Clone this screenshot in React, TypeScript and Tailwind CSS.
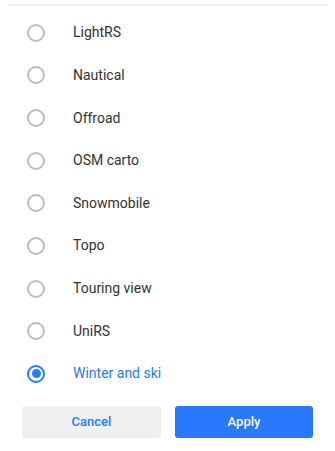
import React, { useState } from "react";

const styles = [
  "LightRS",
  "Nautical",
  "Offroad",
  "OSM carto",
  "Snowmobile",
  "Topo",
  "Touring view",
  "UniRS",
  "Winter and ski",
];

function Radio({ checked }: { checked: boolean }) {
  return (
    <span
      className={`flex h-[18px] w-[18px] items-center justify-center rounded-full border-2 ${
        checked ? "border-[#2979ff]" : "border-[#bdbdbd]"
      }`}
    >
      {checked && <span className="h-[9px] w-[9px] rounded-full bg-[#2979ff]" />}
    </span>
  );
}

export default function App() {
  const [selected, setSelected] = useState("Winter and ski");

  return (
    <div className="h-[451px] w-[335px] bg-white font-['Roboto',sans-serif]">
      <div className="pt-1">
        <div className="ml-2 mr-[7px] h-[2px] bg-[#efefef]" />
      </div>

      {/* Style list */}
      <ul className="pt-[5.5px]">
        {styles.map((name) => {
          const active = name === selected;
          return (
            <li
              key={name}
              onClick={() => setSelected(name)}
              className="flex h-[42.625px] cursor-pointer items-center"
            >
              <span className="ml-[27px] flex w-[46px]">
                <Radio checked={active} />
              </span>
              <span
                className={`text-[14px] ${active ? "text-[#2979ff]" : "text-[#333333]"}`}
              >
                {name}
              </span>
            </li>
          );
        })}
      </ul>

      {/* Actions */}
      <div className="mt-[11px] flex gap-[14px] pl-[22px] pr-[22px]">
        <button className="h-8 w-[139px] rounded-[3px] bg-[#efefef] text-[13px] font-medium text-[#2979ff]">
          Cancel
        </button>
        <button className="h-8 w-[138px] rounded-[3px] bg-[#2979ff] text-[13px] font-medium text-white">
          Apply
        </button>
      </div>
    </div>
  );
}
